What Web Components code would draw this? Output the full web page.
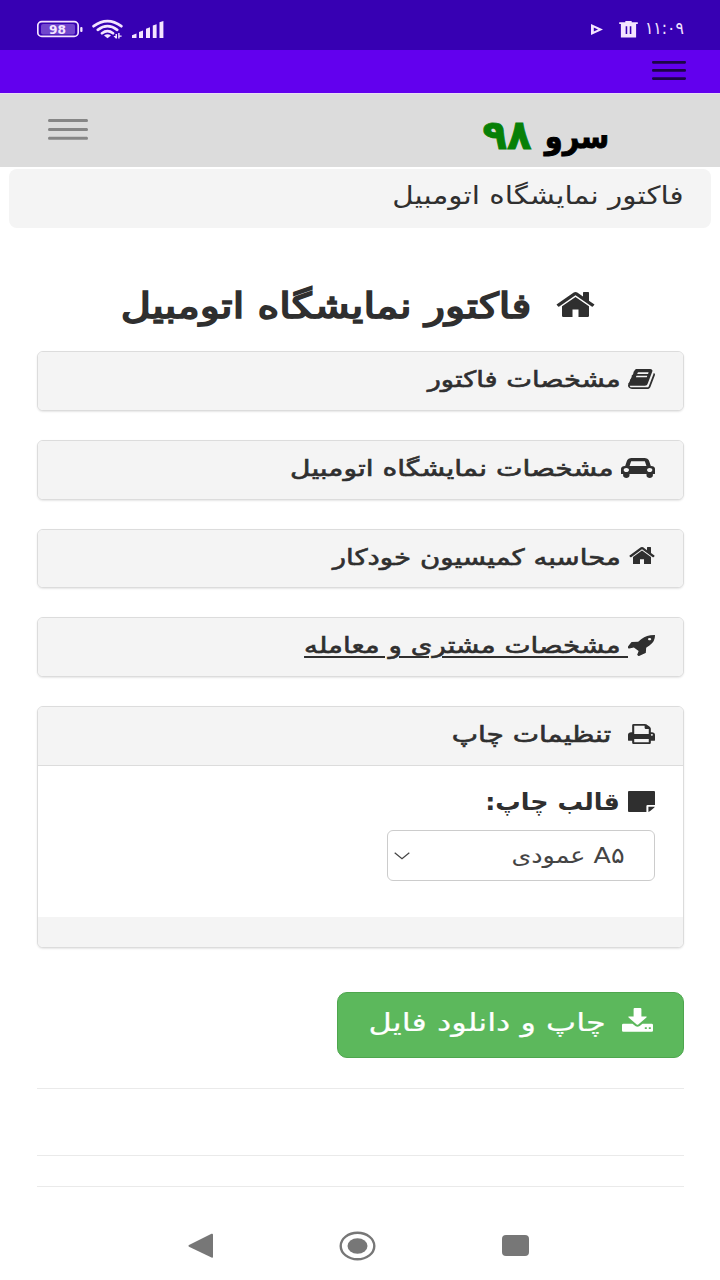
<!DOCTYPE html>
<html lang="fa">
<head>
<meta charset="utf-8">
<title>فاکتور نمایشگاه اتومبیل</title>
<style>
html,body{margin:0;padding:0;background:#fff}
body{width:720px;height:1280px;overflow:hidden;font-family:"DejaVu Sans",sans-serif;color:#2f2f2f}
</style>
</head>
<body>
<invoice-app></invoice-app>
<script>
const define = (name, html, setup) => {
  const tpl = document.createElement('template');
  tpl.innerHTML = html;
  customElements.define(name, class extends HTMLElement {
    connectedCallback() {
      if (this.shadowRoot) return;
      this.attachShadow({mode: 'open'}).append(tpl.content.cloneNode(true));
      if (setup) setup(this, this.shadowRoot);
    }
  });
};

const icons = {
  home: ['64 253 1664 1283', 'M1472 992v480q0 26-19 45t-45 19h-384v-384h-256v384h-384q-26 0-45-19t-19-45v-480q0-1 .5-3t.5-3l575-474 575 474q1 2 1 6zm223-69l-62 74q-8 9-21 11h-3q-13 0-21-7l-692-577-692 577q-12 8-24 7-13-2-21-11l-62-74q-8-10-7-23.5t11-21.5l719-599q32-26 76-26t76 26l244 204v-195q0-14 9-23t23-9h192q14 0 23 9t9 23v408l219 182q10 8 11 21.5t-7 23.5z'],
  book: ['64 128 1665 1536', 'M1703 478q40 57 18 129l-275 906q-19 64-76.5 107.5t-122.5 43.5h-923q-77 0-148.5-53.5t-99.5-131.5q-24-67-2-127 0-4 3-27t4-37q1-8-3-21.5t-3-19.5q2-11 8-21t16.5-23.5 16.5-23.5q23-38 45-91.5t30-91.5q3-10 .5-30t-.5-28q3-11 17-28t17-23q21-36 42-92t25-90q1-9-2.5-32t.5-28q4-13 22-30.5t22-22.5q19-26 42.5-84.5t27.5-96.5q1-8-3-25.5t-2-26.5q2-8 9-18t18-23 17-21q8-12 16.5-30.5t15-35 16-36 19.5-32 26.5-23.5 36-11.5 47.5 5.5l-1 3q38-9 51-9h761q74 0 114 56t18 130l-274 906q-36 119-71.5 153.5t-128.5 34.5h-869q-27 0-38 15-11 16-1 43 24 70 144 70h923q29 0 56-15.5t35-41.5l300-987q7-22 5-57 38 15 59 43zm-1064 2q-4 13 2 22.5t20 9.5h608q13 0 25.5-9.5t16.5-22.5l21-64q4-13-2-22.5t-20-9.5h-608q-13 0-25.5 9.5t-16.5 22.5zm-83 256q-4 13 2 22.5t20 9.5h608q13 0 25.5-9.5t16.5-22.5l21-64q4-13-2-22.5t-20-9.5h-608q-13 0-25.5 9.5t-16.5 22.5z'],
  car: ['0 128 2048 1600', 'M480 1088q0-66-47-113t-113-47-113 47-47 113 47 113 113 47 113-47 47-113zm36-320h1016l-89-357q-2-8-14-17.5t-21-9.5h-768q-9 0-21 9.5t-14 17.5zm1372 320q0-66-47-113t-113-47-113 47-47 113 47 113 113 47 113-47 47-113zm160-96v384q0 14-9 23t-23 9h-96v128q0 80-56 136t-136 56-136-56-56-136v-128h-1024v128q0 80-56 136t-136 56-136-56-56-136v-128h-96q-14 0-23-9t-9-23v-384q0-93 65.5-158.5t158.5-65.5h28l105-419q23-94 104-157.5t179-63.5h768q98 0 179 63.5t104 157.5l105 419h28q93 0 158.5 65.5t65.5 158.5z'],
  rocket: ['64 128 1600 1632', 'M1440 448q0-40-28-68t-68-28-68 28-28 68 28 68 68 28 68-28 28-68zm224-288q0 249-75.5 430.5t-253.5 360.5q-81 80-195 176l-20 379q-2 16-16 26l-384 224q-7 4-16 4-12 0-23-9l-64-64q-13-14-8-32l85-276-281-281-276 85q-3 1-9 1-14 0-23-9l-64-64q-17-19-5-39l224-384q10-14 26-16l379-20q96-114 176-195 188-187 358-258t431-71q14 0 24 9.5t10 22.5z'],
  print: ['64 128 1664 1536', 'M448 1536h896v-256h-896v256zm0-640h896v-384h-160q-40 0-68-28t-28-68v-160h-640v640zm1152 64q0-26-19-45t-45-19-45 19-19 45 19 45 45 19 45-19 19-45zm128 0v416q0 13-9.5 22.5t-22.5 9.5h-224v160q0 40-28 68t-68 28h-960q-40 0-68-28t-28-68v-160h-224q-13 0-22.5-9.5t-9.5-22.5v-416q0-79 56.5-135.5t135.5-56.5h64v-544q0-40 28-68t68-28h672q40 0 88 20t76 48l152 152q28 28 48 76t20 88v256h64q79 0 135.5 56.5t56.5 135.5z'],
  note: ['0 0 27 22', 'M1 0H26Q27 0 27 1V14.6H19.6Q18.4 14.6 18.4 15.8V22H1Q0 22 0 21V1Q0 0 1 0ZM20.4 16.4H26.8Q26.5 17.3 25.5 18.2L22.5 20.8Q21.3 21.8 20.4 21.9Z'],
  download: ['0 0 31 24', 'M12.6 0H18.4Q19.4 0 19.4 1V8.4H24Q25.4 8.4 24.4 9.5L16.3 16.5Q15.5 17.2 14.7 16.5L6.6 9.5Q5.6 8.4 7 8.4H11.6V1Q11.6 0 12.6 0ZM1.3 15.8H10.5L13.3 18Q15.5 19.4 17.7 18L20.5 15.8H29.7Q31 15.8 31 17V22.6Q31 23.8 29.7 23.8H1.3Q0 23.8 0 22.6V17Q0 15.8 1.3 15.8ZM22.8 19.2V21H24.8V19.2ZM26.8 19.2V21H28.8V19.2Z'],
  menu: ['0 0 40 22', 'M1.2 0H38.8Q40 0 40 1.5T38.8 3H1.2Q0 3 0 1.5T1.2 0ZM1.2 8.9H38.8Q40 8.9 40 10.4T38.8 11.9H1.2Q0 11.9 0 10.4T1.2 8.9ZM1.2 17.8H38.8Q40 17.8 40 19.3T38.8 20.8H1.2Q0 20.8 0 19.3T1.2 17.8Z'],
  trash: ['0 0 18 16', 'M6 1.1V0H12V1.1H17.8V2.9H16.2V16H1.8V2.9H.2V1.1ZM6.3 5V12.6H7.8V5ZM10.2 5V12.6H11.7V5Z'],
  play: ['0 0 12 11', 'M0 0L12 5.5 0 11ZM2.8 3.6V7.6L7 5.6Z']
};

define('ui-icon', `<style>
:host{display:block;flex:none}
svg{display:block;width:100%;height:100%;fill:currentColor;fill-rule:evenodd}
</style><svg preserveAspectRatio="none"><path/></svg>`, (host, root) => {
  const [box, d] = icons[host.getAttribute('name')];
  host.style.width = host.getAttribute('w') + 'px';
  host.style.height = host.getAttribute('h') + 'px';
  root.querySelector('svg').setAttribute('viewBox', box);
  root.querySelector('path').setAttribute('d', d);
});

/* A single line of text, stretched horizontally so its ink spans the given width. */
define('fit-text', `<style>
:host{display:block;flex:none;direction:rtl;white-space:nowrap}
span{display:inline-block;transform-origin:100% 50%;-webkit-text-stroke:var(--stroke,0) currentColor;text-decoration:var(--line,none) 1.8px;text-underline-offset:3px}
</style><span></span>`, (host, root) => {
  const span = root.querySelector('span');
  const text = span.textContent = host.getAttribute('text');
  const w = +host.getAttribute('w');
  host.style.width = w + 'px';
  host.style.fontSize = host.getAttribute('size') + 'px';
  const cs = getComputedStyle(host);
  const ctx = document.createElement('canvas').getContext('2d');
  ctx.font = `${cs.fontWeight} ${cs.fontSize} ${cs.fontFamily}`;
  ctx.direction = 'rtl';
  ctx.textAlign = 'left';
  const m = ctx.measureText(text);
  const k = (w - 1) / (m.actualBoundingBoxLeft + m.actualBoundingBoxRight);
  const bearing = m.width - m.actualBoundingBoxRight;
  span.style.transform = `translateX(${bearing * k - .5}px) scaleX(${k})`;
});

define('status-bar', `<style>
:host{display:flex;height:50px;background:#3700b3;color:#f4e4ff;box-sizing:border-box;padding:0 36px 0 37px;align-items:flex-start}
.left{display:block;width:128px;height:24px;margin-top:18px}
.grow{flex:1}
.num{font:bold 11.5px "DejaVu Sans",sans-serif}
</style>
<svg class="left" viewBox="37 18 128 24" fill="currentColor">
<rect x="37.8" y="21.6" width="40.4" height="14.8" rx="4" fill="none" stroke="currentColor" stroke-width="1.7"/>
<rect x="41" y="24" width="34" height="10.4" rx="2" fill="#7146cc"/>
<rect x="80.2" y="27" width="2.3" height="5" rx="1"/>
<text class="num" x="49" y="33.6" textLength="17" lengthAdjust="spacingAndGlyphs">98</text>
<g fill="none" stroke="currentColor" stroke-width="2.7" stroke-linecap="round">
<path d="M93.6 26.2Q107.5 16 121.3 26.2M97.8 29.8Q107.5 22.6 117.2 29.8M102 33.2Q107.5 29 113 33.2"/></g>
<path d="M104 35.6Q107.5 33 111 35.6L107.5 38.2Z"/>
<path d="M113.5 36h2v-2h1.5v4.6h-1.3zM118.2 33h1.4v2.4h2v1.4h-2v1.6h-1.4z"/>
<path d="M132 38V35.3L136.5 33.5V38ZM139 38V32L143 30.4V38ZM146 38V28.7L150 27.2V38ZM152.8 38V25.6L156.6 24.2V38ZM159.5 38V22.3L163.4 21V38Z"/>
</svg>
<div class="grow"></div>
<ui-icon name="play" w="12" h="11" style="margin-top:23.5px"></ui-icon>
<ui-icon name="trash" w="19" h="16.5" style="margin:21px 0 0 16px"></ui-icon>
<fit-text text="۱۱:۰۹" w="38" size="17" style="margin:18px 0 0 8px;line-height:21px"></fit-text>`);

define('app-bar', `<style>
:host{display:flex;height:43px;background:#6200ee;color:#1c0548;justify-content:flex-end;box-sizing:border-box;padding:11px 34px 0 0}
</style><ui-icon name="menu" w="34" h="20"></ui-icon>`);

define('site-nav', `<style>
:host{display:flex;height:74px;background:#dcdcdc;box-sizing:border-box;padding:0 113px 0 48px;box-shadow:inset 0 1px #e9dcf5}
ui-icon{margin-top:26px;color:#868686}
.grow{flex:1}
.logo{display:flex;gap:10px;font-weight:bold;color:#000;--stroke:.9px}
</style><ui-icon name="menu" w="40" h="22"></ui-icon><div class="grow"></div>
<div class="logo"><fit-text text="۹۸" w="49" size="41" style="color:#078007;line-height:50px;margin-top:17px"></fit-text>
<fit-text text="سرو" w="65" size="33" style="line-height:50px;margin-top:19px"></fit-text></div>`);

define('page-crumb', `<style>
:host{display:flex;direction:rtl;box-sizing:border-box;margin:2px 9px 0 9px;height:59px;background:#f4f4f4;border-radius:8px;padding:0 28px 0 0;line-height:53px}
</style><fit-text text="فاکتور نمایشگاه اتومبیل" w="290" size="25"></fit-text>`);

define('page-title', `<style>
:host{display:flex;direction:rtl;margin:64px 125px 0 0;height:59px;line-height:28px;--stroke:1.7px}
ui-icon{margin-left:26px}
</style><ui-icon name="home" w="39" h="25"></ui-icon><fit-text text="فاکتور نمایشگاه اتومبیل" w="407" size="35"></fit-text>`);

define('panel-card', `<style>
:host{display:block;box-sizing:border-box;border:1px solid #dcdcdc;border-radius:6px;background:#fff;box-shadow:0 1px 2px rgba(0,0,0,.1);overflow:hidden;margin:0 36px 29px 37px}
.head{display:flex;direction:rtl;height:57.8px;background:#f4f4f4;padding-right:28px;box-sizing:border-box;line-height:55px;--stroke:.6px}
ui-icon{margin-top:17px}
.gap{height:1.8px;align-self:flex-start}
:host([underlined]){--line:underline}
:host([underlined]) .gap{margin-top:37.6px;background:#2f2f2f}
</style><div class="head"></div><slot></slot>`, (host, root) => {
  const a = n => host.getAttribute(n);
  root.querySelector('.head').innerHTML = `<ui-icon name="${a('icon')}" w="${a('iw')}" h="${a('ih')}"></ui-icon><div class="gap" style="width:${a('gap')}px"></div><fit-text text="${a('label')}" w="${a('w')}" size="22.5"></fit-text>`;
});

define('print-settings', `<style>
:host{display:block;direction:rtl;border-top:1px solid #dcdcdc;--stroke:0}
.body{height:151px;box-sizing:border-box;padding:0 28px 0 0}
.label{display:flex;height:64px;font-weight:bold;line-height:72px}
.label ui-icon{margin:25px 0 0 9px}
.select{display:flex;justify-content:space-between;box-sizing:border-box;width:268px;height:51px;border:1.5px solid #ccc;border-radius:6px;padding:0 30px 0 6px;line-height:49px;color:#444}
.select svg{width:16px;height:8px;margin-top:21px;fill:none;stroke:#444;stroke-width:1.2}
.foot{height:30px;background:#f4f4f4}
</style><div class="body"><div class="label"><ui-icon name="note" w="27" h="21"></ui-icon><fit-text text="قالب چاپ:" w="132" size="23.5"></fit-text></div>
<div class="select"><fit-text text="A۵ عمودی" w="112" size="22"></fit-text><svg viewBox="0 0 16 8"><path d="M.7.7 8 6.8 15.3.7"/></svg></div></div><div class="foot"></div>`);

define('download-button', `<style>
:host{display:flex;direction:rtl;box-sizing:border-box;width:347px;height:66px;margin:44px 0 0 337px;background:#5cb85c;border:1.5px solid #4ea64e;border-radius:10px;color:#fff;padding-right:30px;line-height:59px;--stroke:.2px}
ui-icon{margin:15px 0 0 18px}
</style><ui-icon name="download" w="31" h="24"></ui-icon><fit-text text="چاپ و دانلود فایل" w="235" size="25"></fit-text>`);

define('page-rules', `<style>
:host{display:block;margin:30px 36px 0 37px}
div{height:1px;background:#eaeaea}
</style><div></div><div style="margin-top:66px"></div><div style="margin-top:30px"></div>`);

define('system-nav', `<style>
:host{display:flex;margin-top:44px;height:30px;padding-left:188px;align-items:center;color:#777}
svg{display:block;fill:#777}
.sq{width:27px;height:21px;border-radius:4px;background:#777;margin-left:126px}
</style><svg width="26" height="26" viewBox="0 0 26 26"><path d="M1 12 23.5.8Q25 .3 25 1.8V23.8Q25 25.2 23.5 24.5L1 13.7Q-.2 12.8 1 12Z"/></svg>
<svg width="37" height="30" viewBox="0 0 37 30" style="margin-left:125px"><ellipse cx="18.5" cy="15" rx="16.8" ry="13.3" fill="none" stroke="#777" stroke-width="2.4"/><ellipse cx="18.5" cy="15" rx="10" ry="7.8"/></svg><div class="sq"></div>`);

define('invoice-app', `<style>:host{display:flex;flex-direction:column;height:1280px;background:#fff}</style>
<status-bar></status-bar><app-bar></app-bar><site-nav></site-nav><page-crumb></page-crumb><page-title></page-title>
<panel-card icon="book" iw="27" ih="20" gap="8" w="194" label="مشخصات فاکتور"></panel-card>
<panel-card icon="car" iw="34" ih="20" gap="8" w="322" label="مشخصات نمایشگاه اتومبیل"></panel-card>
<panel-card icon="home" iw="26" ih="17.5" gap="9" w="289" label="محاسبه کمیسیون خودکار"></panel-card>
<panel-card underlined icon="rocket" iw="27" ih="21" gap="8" w="315" label="مشخصات مشتری و معامله"></panel-card>
<panel-card style="margin-bottom:0" icon="print" iw="27" ih="20" gap="17" w="159" label="تنظیمات چاپ"><print-settings></print-settings></panel-card>
<download-button></download-button><page-rules></page-rules><system-nav></system-nav>`);
</script>
</body>
</html>
